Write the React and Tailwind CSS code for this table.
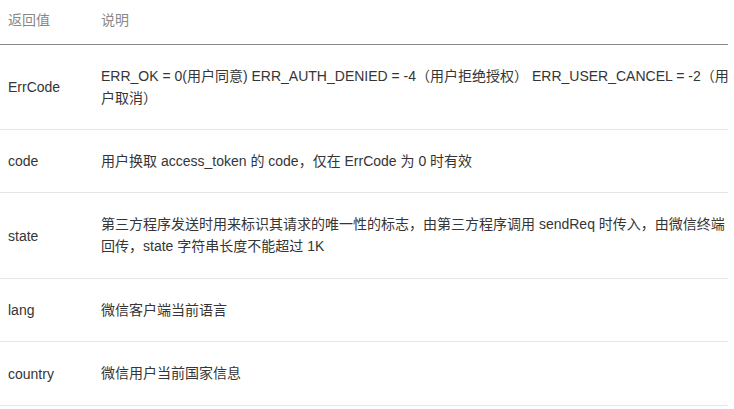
const rows = [
  {
    key: "ErrCode",
    desc: "ERR_OK = 0(用户同意) ERR_AUTH_DENIED = -4（用户拒绝授权） ERR_USER_CANCEL = -2（用户取消）",
    pad: "pt-5 pb-5",
  },
  { key: "code", desc: "用户换取 access_token 的 code，仅在 ErrCode 为 0 时有效", pad: "pt-5 pb-5" },
  {
    key: "state",
    desc: "第三方程序发送时用来标识其请求的唯一性的标志，由第三方程序调用 sendReq 时传入，由微信终端回传，state 字符串长度不能超过 1K",
    pad: "pt-5 pb-[21px]",
  },
  { key: "lang", desc: "微信客户端当前语言", pad: "pt-5 pb-5" },
  { key: "country", desc: "微信用户当前国家信息", pad: "pt-5 pb-[21px]" },
];

export default function App() {
  return (
    <div className="w-[734px] h-[409px] bg-white overflow-hidden font-['Liberation_Sans','Noto_Sans_CJK_SC',sans-serif] text-[14px] leading-[22px]">
      <div className="w-[728px]">
        <div className="grid grid-cols-[101px_1fr] border-b border-[#8a8a8a] text-[#888]">
          <div className="pl-2 pt-[9px] pb-[13px]">返回值</div>
          <div className="pt-[9px] pb-[13px]">说明</div>
        </div>
        {rows.map((r) => (
          <div
            key={r.key}
            className="grid grid-cols-[101px_1fr] border-b border-[#e5e5e5] text-[#353535]"
          >
            <div className="pl-2 flex items-center">{r.key}</div>
            <div className={`${r.pad} -mr-2`}>{r.desc}</div>
          </div>
        ))}
      </div>
    </div>
  );
}
